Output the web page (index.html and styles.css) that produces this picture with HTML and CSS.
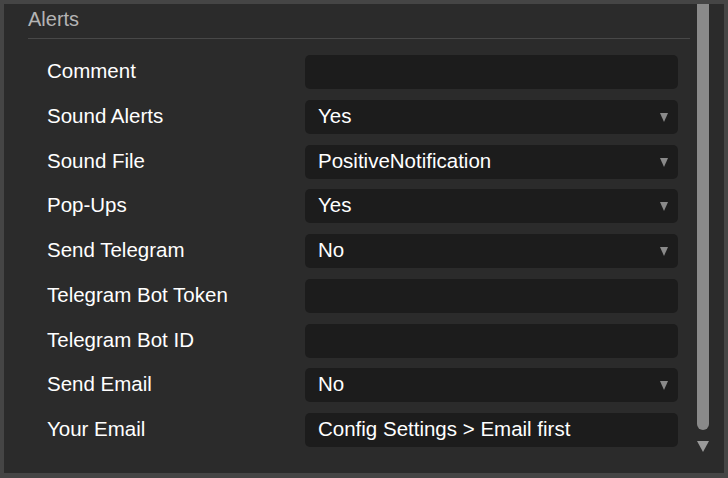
FILE: index.html
```html
<!DOCTYPE html>
<html>
<head>
<meta charset="utf-8">
<link rel="stylesheet" href="styles.css">
</head>
<body>
<div class="frame">
  <div class="panel">
    <div class="content">
      <div class="header">Alerts</div>
      <div class="form">
        <div class="label">Comment</div>
        <div class="field"></div>
        <div class="label">Sound Alerts</div>
        <div class="field select">Yes</div>
        <div class="label">Sound File</div>
        <div class="field select">PositiveNotification</div>
        <div class="label">Pop-Ups</div>
        <div class="field select">Yes</div>
        <div class="label">Send Telegram</div>
        <div class="field select">No</div>
        <div class="label">Telegram Bot Token</div>
        <div class="field"></div>
        <div class="label">Telegram Bot ID</div>
        <div class="field"></div>
        <div class="label">Send Email</div>
        <div class="field select">No</div>
        <div class="label">Your Email</div>
        <div class="field">Config Settings &gt; Email first</div>
      </div>
    </div>
    <div class="scrollbar">
      <div class="thumb"></div>
      <div class="arrow"></div>
    </div>
  </div>
</div>
</body>
</html>
```

FILE: styles.css
```css
html, body {
  margin: 0;
  padding: 0;
  background: #454545;
}
body {
  width: 728px;
  height: 478px;
  font-family: "Liberation Sans", Arial, sans-serif;
  overflow: hidden;
}
.frame {
  box-sizing: border-box;
  width: 728px;
  height: 478px;
  padding: 4px 4px 5px 4px;
}
.panel {
  height: 100%;
  background: #2b2b2b;
  display: flex;
}
.content {
  flex: 1;
  padding: 3px 0 0 24px;
}
.header {
  font-size: 20px;
  line-height: 24px;
  color: #b4b4b4;
  padding-bottom: 7px;
  border-bottom: 1px solid #484848;
}
.form {
  display: grid;
  grid-template-columns: 258px 373px;
  grid-auto-rows: 34px;
  row-gap: 10.75px;
  padding: 16px 0 0 19px;
}
.label {
  color: #ffffff;
  font-size: 20.5px;
  display: flex;
  align-items: center;
  padding-bottom: 2px;
}
.field {
  position: relative;
  background: #1c1c1c;
  border-radius: 5px;
  color: #ffffff;
  font-size: 20.5px;
  display: flex;
  align-items: center;
  padding-left: 13px;
  padding-bottom: 2px;
}
.select::after {
  content: "";
  position: absolute;
  right: 10px;
  top: 13px;
  width: 0;
  height: 0;
  border-left: 4px solid transparent;
  border-right: 4px solid transparent;
  border-top: 9px solid #8a8a8a;
}
.scrollbar {
  width: 18px;
  margin: 0 12px 0 4px;
  display: flex;
  flex-direction: column;
  align-items: center;
}
.thumb {
  width: 12px;
  height: 426px;
  background: #8a8a8a;
  border-radius: 0 0 6px 6px;
}
.arrow {
  margin-top: 11px;
  width: 0;
  height: 0;
  border-left: 6px solid transparent;
  border-right: 6px solid transparent;
  border-top: 11px solid #9a9a9a;
}
```
